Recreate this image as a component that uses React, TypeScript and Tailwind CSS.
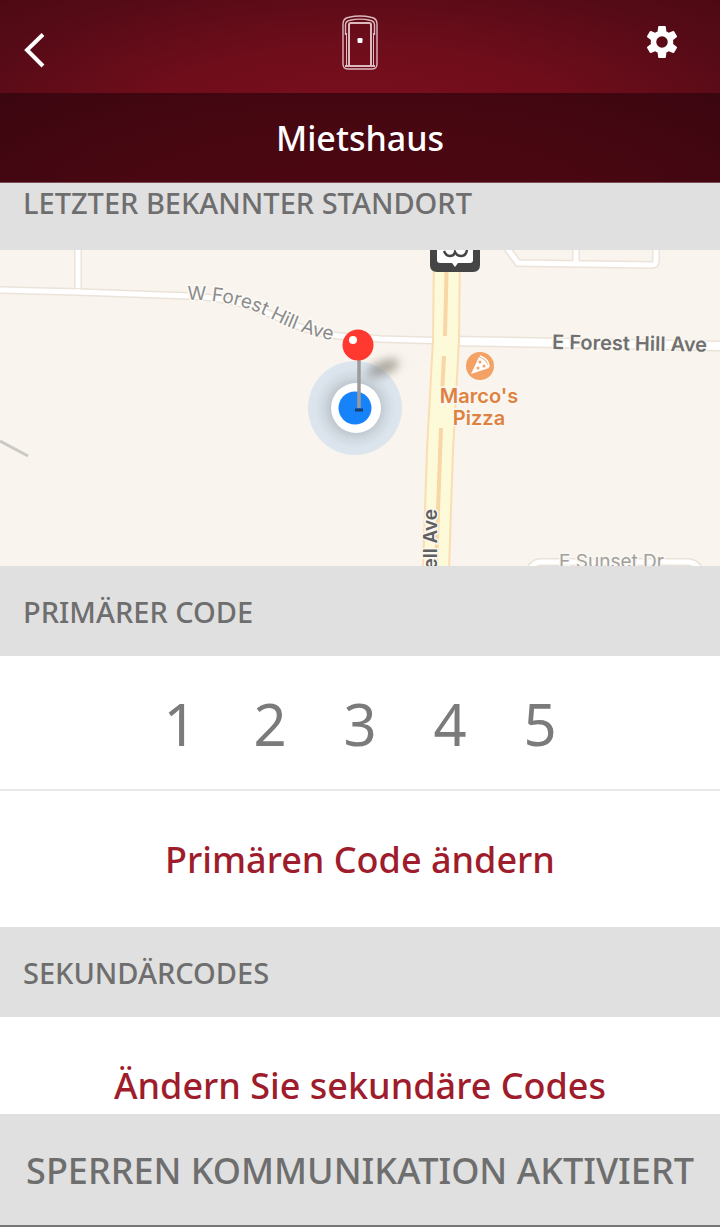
import type { ReactNode } from "react";

const CODE = ["1", "2", "3", "4", "5"];

function SectionHeading({ children }: { children: ReactNode }) {
  return (
    <h2 className="flex h-[90px] items-center bg-[#e0e0e0] px-[23px] pt-0.5 text-[29px] leading-8 font-medium text-[#6e6e6e]">
      {children}
    </h2>
  );
}

function ActionButton({ children }: { children: ReactNode }) {
  return (
    <button type="button" className="block h-[136px] w-full cursor-pointer bg-white pt-0.5 text-center text-[36px] leading-10 font-medium text-[#9e1c2b]">
      {children}
    </button>
  );
}

function DoorIcon() {
  return (
    <svg viewBox="0 0 38 56" className="h-14 w-[38px]" fill="none" stroke="#dcb8bf" strokeWidth="1.400" aria-label="Schloss" role="img">
      <path d="M2 9Q2 3 8 2.200Q19 -.200 30 2.200Q36 3 36 9V49Q36 54 31 54H7Q2 54 2 49Z" />
      <path d="M4.500 20V10Q4.500 6 9 5.200Q19 3 29 5.200Q33.500 6 33.500 10V20" />
      <path d="M5.500 18V51M32.500 18V51" strokeWidth="1" />
      <path d="M8 52V9.500Q8 8 10 8H28Q30 8 30 9.500V52M4 51H34" strokeWidth="2" />
      <rect x="16.500" y="23" width="5" height="5" rx="1.200" fill="white" stroke="none" />
    </svg>
  );
}

function GearIcon() {
  return (
    <svg viewBox="2 2 20 20" className="h-8 w-8" fill="white" aria-hidden="true">
      <path
        fillRule="evenodd"
        d="M10.200 2h3.600q.5 0 .6.500l.35 2.900q.75.300 1.500.800l2.650-1.050q.5-.2.750.250l1.650 2.900q.25.450-.150.750l-2.200 1.750q.1.900 0 2.400l2.200 1.750q.4.300.150.750l-1.650 2.900q-.25.450-.750.250l-2.650-1.050q-.75.500-1.500.800l-.350 2.900q-.1.500-.6.500h-3.600q-.5 0-.6-.500l-.350-2.900q-.75-.300-1.500-.800l-2.650 1.050q-.5.200-.750-.250l-1.650-2.900q-.25-.450.150-.750l2.200-1.750q-.1-1.200 0-2.400l-2.200-1.750q-.4-.300-.150-.750l1.650-2.900q.25-.450.750-.250l2.650 1.050q.75-.500 1.500-.800l.350-2.900q.1-.500.6-.500ZM12 8.400a3.600 3.600 0 1 0 0 7.200 3.600 3.600 0 0 0 0-7.200Z"
      />
    </svg>
  );
}

function Road({ d, width }: { d: string; width: number }) {
  return (
    <>
      <path d={d} stroke="#ebe3d9" strokeWidth={width + 3} />
      <path d={d} stroke="white" strokeWidth={width} />
    </>
  );
}

function LocationMap() {
  return (
    <svg
      viewBox="0 0 720 316"
      className="block w-full bg-[#f9f4ed] font-[Inter,sans-serif]"
      fill="none"
      role="img"
      aria-label="Karte mit dem letzten bekannten Standort"
    >
      <defs>
        <path id="west-label" d="M187 50C218 49 246 56 266 66C288 78 307 85 340 92" />
        <radialGradient id="halo">
          <stop offset="50%" stopColor="#bcc5cc" />
          <stop offset="66%" stopColor="#cfd8df" />
          <stop offset="84%" stopColor="#dbe4ec" />
          <stop offset="100%" stopColor="#dde6ee" />
        </radialGradient>
        <filter id="soft" x="-50%" y="-80%" width="200%" height="260%">
          <feGaussianBlur stdDeviation="5" />
        </filter>
      </defs>

      <Road width={5} d="M78 -5V41" />
      <Road width={5} d="M0 40L78 42L190 46C240 48 265 62 295 75C330 89 350 86 380 89L450 91" />
      <Road width={8} d="M450 91L560 93L720 96" />
      <path d="M76 39h4v3h-4z" fill="white" />
      <Road width={5} d="M576 -5V13" />
      <Road width={5} d="M504 -6L518 13L652 15Q656 15 656 10V-5" />
      <path d="M573 10h6v4h-6z" fill="white" />
      <Road width={5} d="M528 324Q532 312 540 312H688Q697 312 702 324" />
      <path d="M0 191L28 206" stroke="#cbc9c5" strokeWidth="3" />

      <path d="M447 0L446 90L440 200L436 320" stroke="#fbddb2" strokeWidth="28" />
      <path d="M447 0L446 90L440 200L436 320" stroke="#fcfad8" strokeWidth="24" />
      <path d="M447 0L445 86M444 106L442 145M441 178L438 260L436 320" stroke="#f8d6a5" strokeWidth="4" />

      <path d="M430 -4H480V15Q480 22 473 22H437Q430 22 430 15Z" fill="#454545" />
      <path d="M437 -2H473V10Q473 13 470 13H458L455 17L452 13H440Q437 13 437 10Z" fill="white" />
      <path d="M444 1Q446 6 450 6Q454 6 455 2Q457 6 461 6Q466 6 467 0" stroke="#454545" strokeWidth="2.500" />

      <text fill="#8c8c8c" fontSize="19" stroke="#fcfaf6" strokeWidth="3" paintOrder="stroke">
        <textPath href="#west-label">W Forest Hill Ave</textPath>
      </text>
      <g fontWeight="600" stroke="#faf7f1" strokeWidth="3" paintOrder="stroke">
        <text x="552" y="99" transform="rotate(1 552 99)" fontSize="20" fill="#707070">
          E Forest Hill Ave
        </text>
        <g fill="#df8141" fontSize="20" textAnchor="middle">
          <text x="479" y="153">Marco&apos;s</text>
          <text x="479" y="175">Pizza</text>
        </g>
        <text x="437" y="259" transform="rotate(-90 437 259)" textAnchor="end" fontSize="19" fill="#606060">
          ell Ave
        </text>
        <text x="559" y="318" fontSize="19" fontWeight="400" fill="#a0a0a0">
          E Sunset Dr
        </text>
      </g>

      <circle cx="480" cy="116" r="14" fill="#f3a164" />
      <path d="M471 124L479 107Q487 110 489 118Z" fill="white" />
      <path d="M480 106Q489 109 489 117" stroke="white" strokeWidth="1.500" />
      <g fill="#f3a164">
        <circle cx="480" cy="112" r="1.500" />
        <circle cx="484" cy="116" r="1.500" />
        <circle cx="478" cy="118" r="1.500" />
      </g>

      <circle cx="355" cy="158" r="47" fill="url(#halo)" />
      <ellipse cx="383" cy="118" rx="17" ry="7" transform="rotate(-22 383 118)" fill="#77756d" fillOpacity=".6" filter="url(#soft)" />
      <circle cx="356" cy="158" r="25" fill="white" />
      <circle cx="355" cy="158" r="16.500" fill="#1683fb" />
      <path d="M355 160h8" stroke="#173d6b" strokeWidth="3" />
      <path d="M359 108V158" stroke="#9b9b9b" strokeWidth="3.500" />
      <circle cx="358" cy="95" r="15.500" fill="#ff3830" />
      <circle cx="353" cy="90" r="4" fill="white" />
    </svg>
  );
}

export default function App() {
  return (
    <div className="flex min-h-dvh flex-col bg-white font-['Noto_Sans','Open_Sans',sans-serif]">
      <header className="text-white">
        <div className="grid h-[93px] grid-cols-3 items-start bg-[radial-gradient(ellipse_75%_200%_at_50%_130%,#7a0e1e_0%,#6f0d1b_40%,#560b16_75%,#4a0912_100%)] px-6">
          <button type="button" aria-label="Zurück" className="mt-8 w-6 cursor-pointer">
            <svg viewBox="0 0 24 36" className="h-9 w-6" fill="none" stroke="white" strokeWidth="4" aria-hidden="true">
              <path d="M19 2.500L3 18L19 34" />
            </svg>
          </button>
          <div className="mt-[15px] flex justify-center">
            <DoorIcon />
          </div>
          <button type="button" aria-label="Einstellungen" className="mt-[26px] mr-[18px] cursor-pointer justify-self-end">
            <GearIcon />
          </button>
        </div>
        <h1 className="flex h-[90px] items-center justify-center border-b border-[#7d4d55] bg-[radial-gradient(ellipse_75%_200%_at_50%_130%,#4d0812_0%,#480711_45%,#3f0610_80%,#390610_100%)] text-[34px] leading-10 font-medium">
          Mietshaus
        </h1>
      </header>

      <main className="grow">
        <section>
          <h2 className="h-[67px] bg-[#e0e0e0] px-[23px] pt-1 text-[29px] leading-8 font-medium text-[#6e6e6e]">
            LETZTER BEKANNTER STANDORT
          </h2>
          <LocationMap />
        </section>
        <section>
          <SectionHeading>PRIMÄRER CODE</SectionHeading>
          <div className="flex h-[135px] items-center justify-center border-b-2 border-[#e8e8e8] pt-0.5 text-[58px] leading-none text-[#7b7b7b]">
            {CODE.map((digit) => (
              <span key={digit} className="w-[90px] text-center">
                {digit}
              </span>
            ))}
          </div>
          <ActionButton>Primären Code ändern</ActionButton>
        </section>
        <section>
          <SectionHeading>SEKUNDÄRCODES</SectionHeading>
          <div className="h-[97px] overflow-hidden">
            <ActionButton>Ändern Sie sekundäre Codes</ActionButton>
          </div>
        </section>
      </main>

      <footer className="flex h-[113px] items-center justify-center border-b-2 border-[#777] bg-[#e0e0e0] pt-0.5 text-[36px] leading-10 font-medium text-[#6e6e6e]">
        SPERREN KOMMUNIKATION AKTIVIERT
      </footer>
    </div>
  );
}
